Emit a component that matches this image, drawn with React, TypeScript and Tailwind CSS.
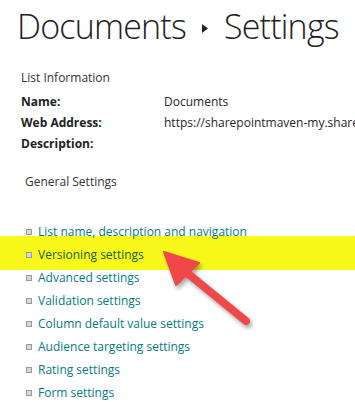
import React from "react";

const items = [
  "List name, description and navigation",
  "Versioning settings",
  "Advanced settings",
  "Validation settings",
  "Column default value settings",
  "Audience targeting settings",
  "Rating settings",
  "Form settings",
];

export default function App() {
  return (
    <div
      className="relative w-[355px] h-[402px] overflow-hidden bg-white text-[#262626]"
      style={{ fontFamily: '"Open Sans", "Noto Sans", sans-serif' }}
    >
      <div className="pl-[17px] pt-[4px] flex items-center text-[34px] leading-[44px] font-light tracking-[-0.8px] text-[#222] whitespace-nowrap">
        <span className="shrink-0">Documents</span>
        <svg width="6" height="9" viewBox="0 0 6 9" className="shrink-0 ml-[16px] mr-[16px] mt-[4px]">
          <path d="M0 0 L6 4.5 L0 9 Z" fill="#222" />
        </svg>
        <span className="shrink-0">Settings</span>
      </div>

      <div className="pl-[21px] pt-[19px] text-[12px] leading-[21px]">
        <div className="text-[#333]">List Information</div>
        <div className="mt-[3px] flex">
          <div className="w-[143px] shrink-0 font-bold text-[#222]">Name:</div>
          <div>Documents</div>
        </div>
        <div className="flex">
          <div className="w-[143px] shrink-0 font-bold text-[#222]">Web Address:</div>
          <div className="whitespace-nowrap">https://sharepointmaven-my.sharepoint.com</div>
        </div>
        <div className="flex">
          <div className="w-[143px] shrink-0 font-bold text-[#222]">Description:</div>
          <div></div>
        </div>
        <div className="pl-[4px] mt-[17px] text-[#333]">General Settings</div>
      </div>

      <ul className="mt-[28px] text-[12px]">
        {items.map((t, i) => (
          <li
            key={t}
            className={
              "flex items-center pl-[26px] " +
              (i === 1
                ? "bg-[#f8f81a] text-[#13631f] h-[34px] pt-[4px] -mt-[7.5px] -mb-[3.5px]"
                : "h-[23px] text-[#037b84]")
            }
          >
            <span className="w-[6px] h-[6px] border border-[#9a9a9a] bg-[#d8d8d8] mr-[6px] shrink-0" />
            <span className="whitespace-nowrap">{t}</span>
          </li>
        ))}
      </ul>

      <svg
        className="absolute left-0 top-0 pointer-events-none"
        width="355"
        height="402"
        viewBox="0 0 355 402"
        style={{ filter: "drop-shadow(2px 3px 2px rgba(0,0,0,0.35))" }}
      >
        <line x1="186" y1="272" x2="246" y2="321" stroke="#f04848" strokeWidth="8" strokeLinecap="round" />
        <path d="M164 252 L199 263 L176 285 Z" fill="#f04848" stroke="#f04848" strokeWidth="2" strokeLinejoin="round" />
      </svg>
    </div>
  );
}
